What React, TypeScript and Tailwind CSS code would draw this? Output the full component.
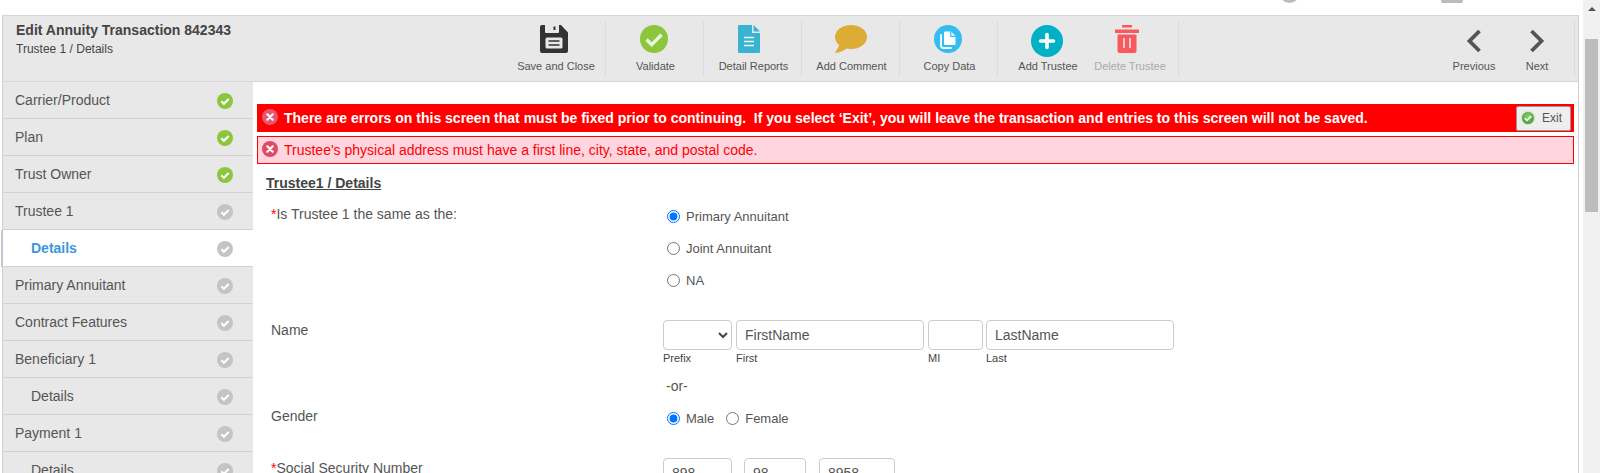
import * as React from 'react';

const sideItems = [
  { label: 'Carrier/Product', done: true },
  { label: 'Plan', done: true },
  { label: 'Trust Owner', done: true },
  { label: 'Trustee 1' },
  { label: 'Details', sub: true, active: true },
  { label: 'Primary Annuitant' },
  { label: 'Contract Features' },
  { label: 'Beneficiary 1' },
  { label: 'Details', sub: true },
  { label: 'Payment 1' },
  { label: 'Details', sub: true },
];

function CheckDot({ color }: { color: string }) {
  return (
    <svg width="16" height="16" viewBox="0 0 16 16" className="mt-[2px] shrink-0">
      <circle cx="8" cy="8" r="8" fill={color} />
      <path d="M4.3 8.2l2.6 2.6 4.8-4.9" fill="none" stroke="#fff" strokeWidth="2.1" />
    </svg>
  );
}

function ErrorDot({ color }: { color: string }) {
  return (
    <svg width="16" height="16" viewBox="0 0 16 16" className="-mt-[2px] shrink-0">
      <circle cx="8" cy="8" r="8" fill={color} />
      <path d="M5.3 5.3l5.4 5.4M10.7 5.3l-5.4 5.4" stroke="#fff" strokeWidth="2.2" strokeLinecap="round" />
    </svg>
  );
}

function SaveIcon() {
  return (
    <svg width="28" height="28" viewBox="0 0 28 28">
      <path
        d="M2 0h3v7q0 1 1 1h12q1 0 1-1V0h2l7 7.500V26q0 2-2 2H2q-2 0-2-2V2q0-2 2-2z"
        fill="#333"
      />
      <path d="M13.500 1.500h2v3.500h-2z" fill="#333" />
      <rect x="5.500" y="12.500" width="17" height="11" rx="1.500" fill="#e8e8e8" />
      <path d="M8.500 16h11M8.500 20h11" stroke="#333" strokeWidth="1.600" />
    </svg>
  );
}

function ValidateIcon() {
  return (
    <svg width="28" height="28" viewBox="0 0 28 28">
      <circle cx="14" cy="14" r="14" fill="#8cc63f" />
      <path d="M6.500 14.500l5.200 5.200 9.800-9.900" fill="none" stroke="#eef6e0" strokeWidth="3.400" />
    </svg>
  );
}

function ReportIcon() {
  return (
    <svg width="22" height="28" viewBox="0 0 22 28">
      <path d="M1 0h13v8h8v19q0 1-1 1H1q-1 0-1-1V1q0-1 1-1z" fill="#3ab3d0" />
      <path d="M15.500 0L22 6.500h-6.500z" fill="#3ab3d0" />
      <path d="M6 12.500h10M6 16.500h10M6 20.500h10" stroke="#e8f6fa" strokeWidth="1.700" />
    </svg>
  );
}

function CommentIcon() {
  return (
    <svg width="32" height="28" viewBox="0 0 32 28">
      <ellipse cx="16" cy="12" rx="16" ry="12" fill="#dcac35" />
      <path d="M5 19L0 28q7-.500 12-5z" fill="#dcac35" />
    </svg>
  );
}

function CopyIcon() {
  return (
    <svg width="28" height="28" viewBox="0 0 28 28">
      <circle cx="14" cy="14" r="14" fill="#33bdf2" />
      <path d="M11 6.500h6l4.500 4.500v8q0 1-1 1H11q-1 0-1-1V7.500q0-1 1-1z" fill="#fff" />
      <path d="M16.800 6.500v4.800h4.700" fill="none" stroke="#33bdf2" strokeWidth="1.200" />
      <path d="M7 10v10.500q0 2.500 2.500 2.500H17" fill="none" stroke="#fff" strokeWidth="1.800" strokeLinecap="round" />
    </svg>
  );
}

function AddIcon() {
  return (
    <svg width="32" height="32" viewBox="0 0 32 32">
      <circle cx="16" cy="16" r="16" fill="#00b0c4" />
      <path d="M16 9.500v13M9.500 16h13" stroke="#fff" strokeWidth="3.600" strokeLinecap="round" />
    </svg>
  );
}

function TrashIcon() {
  return (
    <svg width="24" height="28" viewBox="0 0 24 28">
      <path d="M7 0h10v2.500H7zM0 4.500h24V8H0z" fill="#f8595f" />
      <path d="M2.500 9.500h19V26q0 2-2 2h-15q-2 0-2-2z" fill="#f8595f" />
      <path d="M9 13v10M15 13v10" stroke="#f6c9cb" strokeWidth="2" />
    </svg>
  );
}

function Chevron({ left }: { left?: boolean }) {
  return (
    <svg width="18" height="24" viewBox="0 0 18 24" className="mt-[4px]">
      <path
        d={left ? 'M14.500 2L4.500 12l10 10' : 'M3.500 2l10 10-10 10'}
        fill="none"
        stroke="#555"
        strokeWidth="3.800"
      />
    </svg>
  );
}

function ToolItem({
  label,
  icon,
  className,
  iconClass = '',
  muted,
}: {
  label: string;
  icon: React.ReactNode;
  className: string;
  iconClass?: string;
  muted?: boolean;
}) {
  return (
    <div className={`flex h-full flex-col items-center pt-[4px] ${className}`}>
      <div className={`flex h-8 items-start justify-center ${iconClass}`}>{icon}</div>
      <span className={`mt-[2px] text-[11px] leading-[14px] whitespace-nowrap ${muted ? 'text-[#aaa]' : 'text-[#555]'}`}>
        {label}
      </span>
    </div>
  );
}

function Radio({ name, label, checked, className = '' }: { name: string; label: string; checked?: boolean; className?: string }) {
  return (
    <label className={`flex items-center gap-[6px] ${className}`}>
      <input
        type="radio"
        name={name}
        defaultChecked={checked}
        className="m-0 h-[13px] w-[13px] shrink-0"
      />
      <span className="mt-[2px]">{label}</span>
    </label>
  );
}

function TextBox({ value, className }: { value?: string; className: string }) {
  return (
    <input
      readOnly
      value={value ?? ''}
      className={`h-[30px] rounded-[4px] border border-[#ccc] bg-white px-[8px] text-[14px] text-[#555] ${className}`}
    />
  );
}

function Required() {
  return <span className="text-[#f00]">*</span>;
}

export default function App() {
  return (
    <div className="flex h-[473px] w-[1600px] overflow-hidden bg-white font-['Liberation_Sans',Arial,sans-serif] text-[#555]">
      <div className="flex w-[1583px] flex-col">
        {/* cut off page header above the frame */}
        <div className="flex h-[15px] shrink-0 overflow-hidden">
          <div className="-mt-[18px] ml-[1279px] h-[21px] w-[21px] rounded-full border-[3px] border-[#bbb]" />
          <div className="ml-[141px] h-[3px] w-[22px] rounded-b-[2px] bg-[#bbb]" />
        </div>

        <div className="ml-[2px] flex min-h-0 w-[1577px] flex-1 flex-col border-x border-[#d0d0d0]">
          <header className="flex h-[67px] shrink-0 border-y border-[#d6d6d6] bg-[#e8e8e8]">
            <div className="w-[504px] shrink-0 pl-[13px] pt-[5px]">
              <div className="text-[14px] leading-[18px] font-bold text-[#444]">Edit Annuity Transaction 842343</div>
              <div className="mt-[2px] text-[12px] leading-[16px] text-[#444]">Trustee 1 / Details</div>
            </div>
            <div className="flex h-[56px] flex-1 self-center">
              <ToolItem label="Save and Close" icon={<SaveIcon />} iconClass="mr-[4px]" className="w-[99px] border-r border-[#dcdcdc]" />
              <ToolItem label="Validate" icon={<ValidateIcon />} iconClass="mr-[4px]" className="w-[98px] border-r border-[#dcdcdc] pl-[2px]" />
              <ToolItem label="Detail Reports" icon={<ReportIcon />} iconClass="mr-[10px]" className="w-[98px] border-r border-[#dcdcdc] pl-[2px]" />
              <ToolItem label="Add Comment" icon={<CommentIcon />} iconClass="mr-[2px]" className="w-[98px] border-r border-[#dcdcdc] pl-[2px]" />
              <ToolItem label="Copy Data" icon={<CopyIcon />} iconClass="mr-[4px]" className="w-[98px] border-r border-[#dcdcdc] pl-[2px]" />
              <ToolItem label="Add Trustee" icon={<AddIcon />} iconClass="mr-[2px]" className="w-[90px] pl-[10px]" />
              <ToolItem label="Delete Trustee" icon={<TrashIcon />} iconClass="mr-[6px]" className="w-[91px] border-r border-[#dcdcdc] pr-[6px]" muted />
              <div className="mr-[3px] ml-auto flex border-r border-[#dcdcdc] pr-[6px]">
                <ToolItem label="Previous" icon={<Chevron left />} className="w-[62px] pr-[2px]" />
                <ToolItem label="Next" icon={<Chevron />} className="w-[62px]" />
              </div>
            </div>
          </header>

          <div className="flex min-h-0 flex-1">
            <nav className="w-[250px] shrink-0 bg-[#e8e8e8]">
              {sideItems.map((item, index) => (
                <div
                  key={`${item.label}-${index}`}
                  className={`flex h-[37px] items-center justify-between border-b border-[#d2d2d2] pr-[20px] text-[14px] ${
                    item.active
                      ? '-ml-[2px] border-l-2 border-l-[#c3c8d2] bg-white pl-[28px] font-bold text-[#3a96dd]'
                      : item.sub
                        ? 'pl-[28px] text-[#555]'
                        : 'pl-[12px] text-[#555]'
                  }`}
                >
                  <span>{item.label}</span>
                  <CheckDot color={item.done ? '#8cc63f' : '#c4c4c4'} />
                </div>
              ))}
            </nav>

            <main className="min-w-0 flex-1 px-[4px] pt-[22px]">
              <div className="flex h-[28px] items-center bg-[#f00] pl-[5px]">
                <ErrorDot color="#e6566e" />
                <span className="ml-[6px] text-[14px] font-bold whitespace-pre text-white">
                  There are errors on this screen that must be fixed prior to continuing.  If you select ‘Exit’, you will leave the transaction and entries to this screen will not be saved.
                </span>
                <button className="mr-[3px] ml-auto flex h-[25px] w-[55px] items-center rounded-[2px] border border-[#999] bg-[#eee] pl-[4px] text-[12px] text-[#555]">
                  <svg width="14" height="14" viewBox="0 0 14 14" className="shrink-0">
                    <defs>
                      <radialGradient id="exitGreen" cx="50%" cy="40%" r="60%">
                        <stop offset="0%" stopColor="#8fd06f" />
                        <stop offset="100%" stopColor="#3f9a36" />
                      </radialGradient>
                    </defs>
                    <circle cx="7" cy="7" r="6.500" fill="url(#exitGreen)" stroke="#cfe8c4" />
                    <path d="M3.800 7.200l2.200 2.200 4.200-4.300" fill="none" stroke="#fff" strokeWidth="1.600" />
                  </svg>
                  <span className="ml-[7px]">Exit</span>
                </button>
              </div>
              <div className="mt-[4px] flex h-[28px] items-center border border-[#f00] bg-[#ffd6e0] pl-[4px]">
                <ErrorDot color="#dc4c64" />
                <span className="ml-[6px] text-[14px] text-[#f00]">
                  Trustee's physical address must have a first line, city, state, and postal code.
                </span>
              </div>

              <h2 className="mt-[9px] pl-[9px] text-[14px] leading-[20px] font-bold text-[#444] underline">
                Trustee1 / Details
              </h2>

              <div className="mt-[7px] flex pl-[14px]">
                <div className="w-[392px] text-[14px] leading-[28px]">
                  <Required />
                  Is Trustee 1 the same as the:
                </div>
                <div className="text-[13px]">
                  <Radio name="same" label="Primary Annuitant" checked className="h-8 pl-[4px]" />
                  <Radio name="same" label="Joint Annuitant" className="h-8 pl-[4px]" />
                  <Radio name="same" label="NA" className="h-8 pl-[4px]" />
                </div>
              </div>

              <div className="mt-[24px] flex pl-[14px]">
                <div className="w-[392px] text-[14px] leading-[20px]">Name</div>
                <div>
                  <div className="flex text-[11px] leading-[14px] text-[#444]">
                    <div className="flex w-[73px] flex-col">
                      <select className="h-[30px] w-[69px] rounded-[4px] border border-[#ccc] bg-white" />
                      <span className="mt-[1px]">Prefix</span>
                    </div>
                    <div className="flex w-[192px] flex-col">
                      <TextBox value="FirstName" className="w-[188px]" />
                      <span className="mt-[1px]">First</span>
                    </div>
                    <div className="flex w-[58px] flex-col">
                      <TextBox className="w-[55px]" />
                      <span className="mt-[1px]">MI</span>
                    </div>
                    <div className="flex flex-col">
                      <TextBox value="LastName" className="w-[188px]" />
                      <span className="mt-[1px]">Last</span>
                    </div>
                  </div>
                  <div className="mt-[11px] pl-[3px] text-[14px] leading-[20px]">-or-</div>
                </div>
              </div>

              <div className="mt-[10px] flex pl-[14px]">
                <div className="w-[392px] text-[14px] leading-[20px]">Gender</div>
                <div className="flex h-[24px] items-center pl-[4px] text-[13px]">
                  <Radio name="gender" label="Male" checked />
                  <Radio name="gender" label="Female" className="ml-[12px]" />
                </div>
              </div>

              <div className="mt-[28px] flex pl-[14px]">
                <div className="w-[392px] text-[14px] leading-[20px]">
                  <Required />
                  Social Security Number
                </div>
                <div className="flex items-center text-[14px]">
                  <TextBox value="898" className="w-[69px]" />
                  <span className="w-[12px] text-center">-</span>
                  <TextBox value="98" className="w-[62px]" />
                  <span className="w-[13px] text-center">-</span>
                  <TextBox value="8958" className="w-[76px]" />
                </div>
              </div>
            </main>
          </div>
        </div>
      </div>

      {/* page scrollbar */}
      <div className="flex w-[17px] shrink-0 flex-col items-center bg-[#f1f1f1] pt-[7px]">
        <div className="h-0 w-0 border-x-[4px] border-b-[4px] border-x-transparent border-b-[#505050]" />
        <div className="mt-[28px] h-[173px] w-[13px] bg-[#bdbdbd]" />
      </div>
    </div>
  );
}
